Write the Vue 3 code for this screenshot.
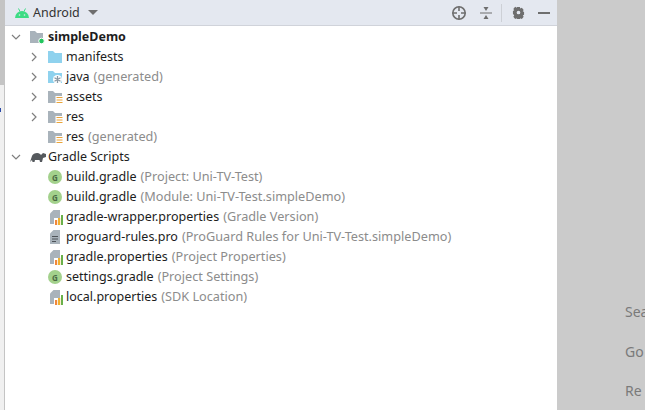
<template>
  <div class="screen">
    <div class="edge">
      <span class="edge-top"></span>
      <span class="edge-mark"></span>
    </div>
    <div class="panel">
      <div class="toolbar">
        <svg class="droid" width="14" height="10" viewBox="0 0 14 10">
          <path d="M0 10a7 7 0 0 1 14 0z" fill="#3ddc84" />
          <path d="M3.500 .5 5 3.500M10.500 .5 9 3.500" stroke="#3ddc84" stroke-width="1" />
          <circle cx="4.500" cy="7" r=".8" fill="#e4e8f0" />
          <circle cx="9.500" cy="7" r=".8" fill="#e4e8f0" />
        </svg>
        <span class="title">Android</span>
        <span class="caret"></span>
        <span class="spacer"></span>
        <svg class="tool" width="16" height="16" viewBox="0 0 16 16" fill="none" stroke="#6e6e6e">
          <circle cx="8" cy="8" r="6.200" stroke-width="1.600" />
          <path d="M8 1.500v4.500M8 10v4.500M1.500 8h4.500M10 8h4.500" stroke-width="1.600" />
        </svg>
        <svg class="tool collapse" width="14" height="14" viewBox="0 0 14 14">
          <path d="M1 7h12" stroke="#6e6e6e" stroke-width="1" />
          <path d="M4.500 1h5L7 5zM7 9l2.500 4h-5z" fill="#6e6e6e" />
        </svg>
        <span class="divider"></span>
        <svg class="tool gear" width="13" height="13" viewBox="0 0 14 14">
          <path fill="#6e6e6e" fill-rule="evenodd" d="M5.500 1h3l.4 1.800 1.700-.9 2 2.300-1 1.500 1.400.8v2.900l-1.400.8 1 1.500-2 2.300-1.700-.9-.4 1.900h-3l-.4-1.900-1.700.9-2-2.300 1-1.500L1 8.400V5.500l1.400-.8-1-1.500 2-2.300 1.700.9zM7 5a2 2 0 1 0 0 4 2 2 0 0 0 0-4z" />
        </svg>
        <span class="minimize"></span>
      </div>
      <ul class="tree">
        <li v-for="row in rows" :key="row.name + row.note" class="row" :class="{ root: row.level === 0 }">
          <svg class="arrow" :class="{ hidden: !row.arrow }" width="10" height="10" viewBox="0 0 10 10" fill="none" stroke="#7f7f7f" stroke-width="1.200">
            <path :d="row.arrow === 'open' ? 'M1 3l4 4 4-4' : 'M3 1l4 4-4 4'" />
          </svg>

          <svg v-if="row.icon === 'module'" class="icon" width="16" height="14" viewBox="0 0 16 14">
            <path d="M1 1h5l2 2h6v10H1z" fill="#a9b3bb" />
            <circle cx="12.500" cy="11" r="2.800" fill="#22c55e" stroke="#fff" />
          </svg>
          <svg v-else-if="row.icon === 'blue'" class="icon" width="16" height="14" viewBox="0 0 16 14">
            <path d="M1 1h5l2 2h7v10H1z" fill="#8fd2ee" />
          </svg>
          <svg v-else-if="row.icon === 'java'" class="icon" width="16" height="14" viewBox="0 0 16 14">
            <path d="M1 1h5l2 2h7v10H1z" fill="#8fd2ee" />
            <circle cx="10.500" cy="9.500" r="4.500" fill="#fff" />
            <path d="M10.500 6v7M7.500 7.700l6 3.500M13.500 7.700l-6 3.500" stroke="#8a98a3" stroke-width="1.300" />
          </svg>
          <svg v-else-if="row.icon === 'res'" class="icon" width="16" height="14" viewBox="0 0 16 14">
            <path d="M1 1h5l2 2h7v10H1z" fill="#a9b3bb" />
            <rect x="8.500" y="6" width="7.500" height="8" fill="#fff" />
            <path d="M9.500 7.500h6M9.500 10h6M9.500 12.500h6" stroke="#eaa43a" />
          </svg>
          <svg v-else-if="row.icon === 'turtle'" class="icon elephant" width="18" height="14" viewBox="0 0 18 14">
            <path d="M1 12 3 6c1-3 6-4 8-2l1 1 2-2 3 1v3l-3 1-1 4h-2l-.5-2H6l-.5 2h-2l-.5-2z" fill="#55595d" />
          </svg>
          <span v-else-if="row.icon === 'gradle'" class="g-badge">G</span>
          <svg v-else-if="row.icon === 'props'" class="icon" width="16" height="16" viewBox="0 0 16 16">
            <path d="M3 4.500 6.500 1H13v14H3z" fill="#a9b3bb" />
            <rect x="7" y="9" width="9" height="7" fill="#fff" />
            <rect x="7" y="5" width="6" height="4" fill="#a9b3bb" />
            <rect x="8" y="11" width="2.200" height="5" fill="#f0883a" />
            <rect x="11" y="9" width="2.200" height="7" fill="#f0b030" />
            <rect x="14" y="6" width="2.200" height="10" fill="#6ab04a" />
          </svg>
          <svg v-else-if="row.icon === 'text'" class="icon" width="16" height="16" viewBox="0 0 16 16">
            <path d="M3 4.500 6.500 1H13v14H3z" fill="#a9b3bb" />
            <path d="M5 7.500h6M5 10h6M5 12.500h4" stroke="#4d5358" />
          </svg>

          <span class="name">{{ row.name }}</span>
          <span v-if="row.note" class="note">{{ row.note }}</span>
        </li>
      </ul>
    </div>
    <div class="side">
      <span>Sea</span>
      <span>Go</span>
      <span>Re</span>
    </div>
  </div>
</template>

<script setup>
const rows = [
  { level: 0, arrow: 'open', icon: 'module', name: 'simpleDemo', note: '' },
  { level: 1, arrow: 'closed', icon: 'blue', name: 'manifests', note: '' },
  { level: 1, arrow: 'closed', icon: 'java', name: 'java', note: '(generated)' },
  { level: 1, arrow: 'closed', icon: 'res', name: 'assets', note: '' },
  { level: 1, arrow: 'closed', icon: 'res', name: 'res', note: '' },
  { level: 1, arrow: '', icon: 'res', name: 'res', note: '(generated)' },
  { level: 0, arrow: 'open', icon: 'turtle', name: 'Gradle Scripts', note: '' },
  { level: 1, arrow: '', icon: 'gradle', name: 'build.gradle', note: '(Project: Uni-TV-Test)' },
  { level: 1, arrow: '', icon: 'gradle', name: 'build.gradle', note: '(Module: Uni-TV-Test.simpleDemo)' },
  { level: 1, arrow: '', icon: 'props', name: 'gradle-wrapper.properties', note: '(Gradle Version)' },
  { level: 1, arrow: '', icon: 'text', name: 'proguard-rules.pro', note: '(ProGuard Rules for Uni-TV-Test.simpleDemo)' },
  { level: 1, arrow: '', icon: 'props', name: 'gradle.properties', note: '(Project Properties)' },
  { level: 1, arrow: '', icon: 'gradle', name: 'settings.gradle', note: '(Project Settings)' },
  { level: 1, arrow: '', icon: 'props', name: 'local.properties', note: '(SDK Location)' },
]
</script>

<style>
html,
body {
  margin: 0;
  overflow: hidden;
}
</style>

<style scoped>
.screen {
  display: flex;
  width: 645px;
  height: 410px;
  background: #cbcbcb;
  font-family: "Noto Sans", "Open Sans", sans-serif;
  font-size: 12.7px;
  overflow: hidden;
}
.edge {
  flex-shrink: 0;
  width: 5px;
  background: #f0f0f0;
  border-right: 1px solid #c4c4c4;
  box-sizing: border-box;
}
.edge-top {
  display: block;
  height: 85px;
  background: #c4c4c4;
}
.edge-mark {
  display: block;
  width: 1px;
  height: 4px;
  margin-top: 23px;
  background: #2b4aa8;
}
.panel {
  width: 552px;
  background: #fff;
  flex-shrink: 0;
}
.toolbar {
  display: flex;
  align-items: center;
  height: 25px;
  padding: 0 7px 0 10px;
  background: #e4e8f0;
  border-bottom: 1px solid #d0d3da;
}
.droid {
  margin-right: 4px;
}
.title {
  font-size: 12.5px;
  color: #333;
}
.caret {
  width: 0;
  height: 0;
  margin-left: 8px;
  border-left: 5px solid transparent;
  border-right: 5px solid transparent;
  border-top: 5px solid #6e6e6e;
}
.spacer {
  flex: 1;
}
.collapse {
  margin-left: 12px;
}
.divider {
  width: 1px;
  height: 18px;
  margin-left: 8px;
  background: #cdd0d6;
}
.gear {
  margin-left: 10px;
}
.minimize {
  width: 12px;
  height: 2px;
  margin-left: 13px;
  background: #6e6e6e;
}
.tree {
  list-style: none;
  margin: 0;
  padding: 0;
}
.row {
  display: flex;
  align-items: center;
  height: 20px;
  padding-left: 24px;
  color: #1d1d1d;
  white-space: nowrap;
}
.row:first-child {
  margin-top: 1px;
}
.row.root {
  padding-left: 6px;
}
.arrow {
  flex-shrink: 0;
  margin-right: 8px;
}
.arrow.hidden {
  visibility: hidden;
}
.icon {
  flex-shrink: 0;
  margin-right: 3px;
}
.icon.elephant {
  margin-right: 1px;
}
.g-badge {
  display: flex;
  align-items: center;
  justify-content: center;
  flex-shrink: 0;
  width: 14px;
  height: 14px;
  margin: 0 4px 0 1px;
  border-radius: 50%;
  background: #a3d18c;
  color: #4b6b44;
  font-size: 8px;
  font-weight: bold;
}
.name {
  margin-bottom: 2px;
  font-size: 12.5px;
}
.row:first-child .name {
  font-weight: bold;
}
.note {
  margin: 0 0 2px 4px;
  color: #8c8c8c;
}
.side {
  display: flex;
  flex-direction: column;
  gap: 20.500px;
  padding: 302px 0 0 68px;
  font-size: 14px;
  color: #7a7a7a;
  white-space: nowrap;
}
</style>
